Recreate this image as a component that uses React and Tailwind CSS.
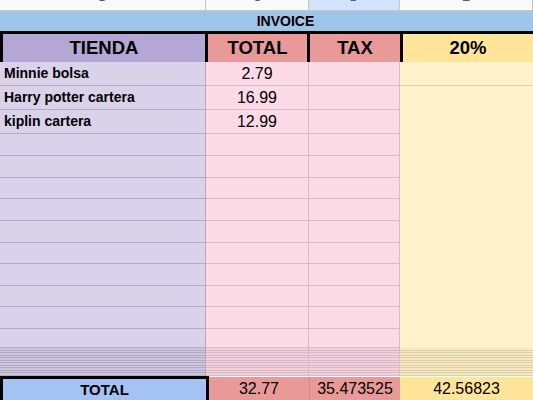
import React from "react";

const rowHeights = [24, 24, 24, 22, 22, 21, 22, 22, 21, 22, 21, 22, 19];
const stripeHeights = [3, 2, 3, 2, 3, 2, 3, 2, 3, 2, 3];
const items = [
  ["Minnie bolsa", "2.79"],
  ["Harry potter cartera", "16.99"],
  ["kiplin cartera", "12.99"],
];

function Stripes({ line }) {
  return (
    <div className="flex flex-col">
      {stripeHeights.map((h, i) => (
        <div
          key={i}
          className={`box-border border-b ${line}`}
          style={{ height: h }}
        />
      ))}
    </div>
  );
}

export default function App() {
  return (
    <div className="w-[533px] h-[400px] overflow-hidden bg-white font-['Liberation_Sans',Arial,sans-serif] text-black">
      {/* column letters row */}
      <div className="grid grid-cols-[206px_103px_91px_133px] h-[11px] border-b border-[#c4c7c5] box-border">
        {[
          ["B", "bg-[#f8f9fa]"],
          ["C", "bg-[#f8f9fa]"],
          ["D", "bg-[#d3e3fd]"],
          ["E", "bg-[#f8f9fa]"],
        ].map(([l, bg]) => (
          <div
            key={l}
            className={`${bg} border-r border-[#c4c7c5] overflow-hidden flex justify-center`}
          >
            <span className="text-[12px] leading-none -mt-[9px] text-[#575b5f]">{l}</span>
          </div>
        ))}
      </div>

      {/* INVOICE */}
      <div className="h-[20px] bg-[#9fc5e8] flex items-center justify-center pl-[38px] text-[14px] font-bold">
        INVOICE
      </div>

      {/* header */}
      <div className="grid grid-cols-[208px_102px_93px_130px] h-[31px] box-border border-y-[3px] border-black text-[18.5px] font-bold">
        <div className="bg-[#b4a7d6] border-l-[3px] border-r-[3px] border-black flex items-center justify-center">
          TIENDA
        </div>
        <div className="bg-[#ea9999] border-r-[3px] border-black flex items-center justify-center">
          TOTAL
        </div>
        <div className="bg-[#ea9999] border-r-[3px] border-black flex items-center justify-center">
          TAX
        </div>
        <div className="bg-[#ffe599] flex items-center justify-center">20%</div>
      </div>

      {/* data */}
      <div className="flex h-[314px]">
        {/* column A */}
        <div className="w-[206px] flex flex-col bg-[#d9d2e9] border-r border-[#b0a8c0] box-border">
          {rowHeights.map((h, i) => (
            <div
              key={i}
              className="box-border border-b border-[#b3abc3] flex items-center pl-[4px] text-[14px] font-bold"
              style={{ height: h }}
            >
              {items[i] ? items[i][0] : ""}
            </div>
          ))}
          <Stripes line="border-[#b3abc3] bg-[#cdc5dc]" />
        </div>
        {/* column B */}
        <div className="w-[103px] flex flex-col bg-[#fcdbe7] border-r border-[#d8b6c3] box-border">
          {rowHeights.map((h, i) => (
            <div
              key={i}
              className="box-border border-b border-[#d9b9c5] flex items-center justify-center text-[16px]"
              style={{ height: h }}
            >
              {items[i] ? items[i][1] : ""}
            </div>
          ))}
          <Stripes line="border-[#d9b9c5] bg-[#f1d0dc]" />
        </div>
        {/* column C */}
        <div className="w-[91px] flex flex-col bg-[#fcdbe7] border-r border-[#d8c0b8] box-border">
          {rowHeights.map((h, i) => (
            <div
              key={i}
              className="box-border border-b border-[#d9b9c5]"
              style={{ height: h }}
            />
          ))}
          <Stripes line="border-[#d9b9c5] bg-[#f1d0dc]" />
        </div>
        {/* column D */}
        <div className="w-[133px] flex flex-col bg-[#fff2cc]">
          <div className="h-[24px] box-border border-b border-[#ddd0ab]" />
          <div className="h-[262px]" />
          <Stripes line="border-[#ddd0ab] bg-[#f5e7c0]" />
        </div>
      </div>

      {/* TOTAL row */}
      <div className="grid grid-cols-[209px_100px_91px_133px] h-[24px] text-[16px]">
        <div className="bg-[#a4c2f4] border-t-[3px] border-l-[3px] border-r-[3px] border-black flex items-center justify-center font-bold text-[15px]">
          TOTAL
        </div>
        <div className="bg-[#ea9999] mt-[1px] flex items-center justify-center">32.77</div>
        <div className="bg-[#ea9999] mt-[1px] border-l border-[#d48a8a] flex items-center justify-center">
          35.473525
        </div>
        <div className="bg-[#ffe599] mt-[1px] flex items-center justify-center">42.56823</div>
      </div>
    </div>
  );
}
